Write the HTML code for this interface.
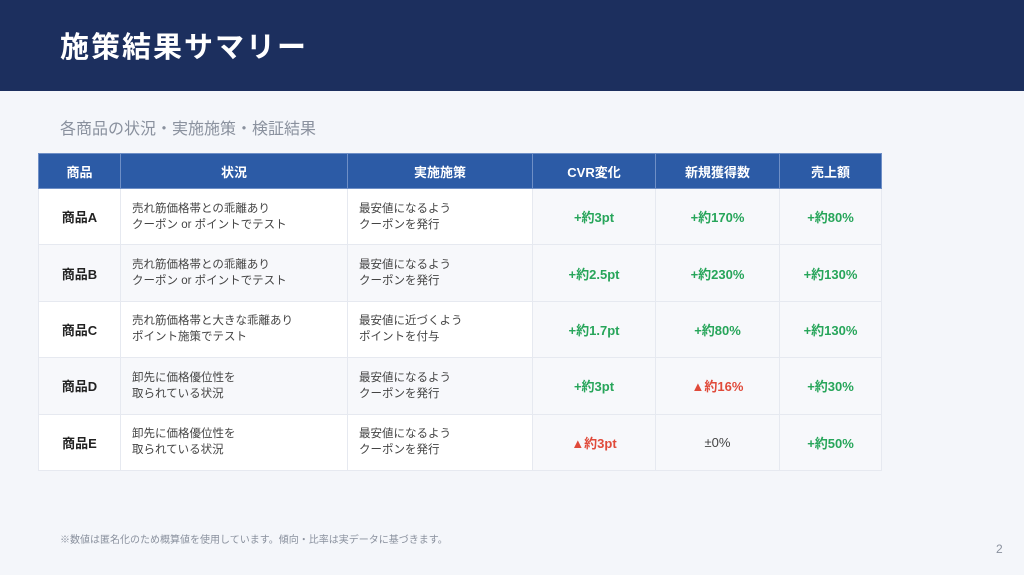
<!DOCTYPE html>
<html><head><meta charset="utf-8"><style>
*{margin:0;padding:0;box-sizing:border-box}
body{width:1024px;height:575px;background:#f4f6fa;font-family:"Liberation Sans","Noto Sans CJK JP",sans-serif;position:relative;overflow:hidden}
.hd{position:absolute;left:0;top:0;width:1024px;height:91px;background:#1c2f5e}
.hd h1{position:absolute;left:60px;top:24px;color:#fff;font-size:29px;font-weight:bold;letter-spacing:2px}
.sub{position:absolute;left:60px;top:115px;font-size:16px;color:#8a919e}
table{position:absolute;left:38px;top:153px;border-collapse:collapse;table-layout:fixed;width:843px}
th{background:#2c5ba6;color:#fff;font-size:13px;font-weight:bold;height:35px;border:1px solid #6f8fc6}
td{border:1px solid #e6e9f0;height:56.4px;font-size:11.5px;color:#444;background:#fff}
tr.alt td{background:#f7f8fb}
td.m{background:#f7f8fb;text-align:center;font-weight:bold;font-size:13px;color:#27a55a}
td.p{text-align:center;font-weight:bold;font-size:13px;color:#222}
td.t{padding-left:11px;line-height:16px}
.r{color:#e04a3a!important}.n{color:#444!important;font-weight:normal!important}
.foot{position:absolute;left:60px;top:531px;font-size:10px;color:#8a919e}
.pg{position:absolute;left:996px;top:542px;font-size:12px;color:#8a919e}
</style></head><body>
<div class="hd"><h1>施策結果サマリー</h1></div>
<div class="sub">各商品の状況・実施施策・検証結果</div>
<table>
<colgroup><col style="width:82px"><col style="width:227px"><col style="width:185px"><col style="width:123px"><col style="width:124px"><col style="width:102px"></colgroup>
<tr><th>商品</th><th>状況</th><th>実施施策</th><th>CVR変化</th><th>新規獲得数</th><th>売上額</th></tr>
<tr><td class="p">商品A</td><td class="t">売れ筋価格帯との乖離あり<br>クーポン or ポイントでテスト</td><td class="t">最安値になるよう<br>クーポンを発行</td><td class="m">+約3pt</td><td class="m">+約170%</td><td class="m">+約80%</td></tr>
<tr class="alt"><td class="p">商品B</td><td class="t">売れ筋価格帯との乖離あり<br>クーポン or ポイントでテスト</td><td class="t">最安値になるよう<br>クーポンを発行</td><td class="m">+約2.5pt</td><td class="m">+約230%</td><td class="m">+約130%</td></tr>
<tr><td class="p">商品C</td><td class="t">売れ筋価格帯と大きな乖離あり<br>ポイント施策でテスト</td><td class="t">最安値に近づくよう<br>ポイントを付与</td><td class="m">+約1.7pt</td><td class="m">+約80%</td><td class="m">+約130%</td></tr>
<tr class="alt"><td class="p">商品D</td><td class="t">卸先に価格優位性を<br>取られている状況</td><td class="t">最安値になるよう<br>クーポンを発行</td><td class="m">+約3pt</td><td class="m r">▲約16%</td><td class="m">+約30%</td></tr>
<tr><td class="p">商品E</td><td class="t">卸先に価格優位性を<br>取られている状況</td><td class="t">最安値になるよう<br>クーポンを発行</td><td class="m r">▲約3pt</td><td class="m n">±0%</td><td class="m">+約50%</td></tr>
</table>
<div class="foot">※数値は匿名化のため概算値を使用しています。傾向・比率は実データに基づきます。</div>
<div class="pg">2</div>
</body></html>
